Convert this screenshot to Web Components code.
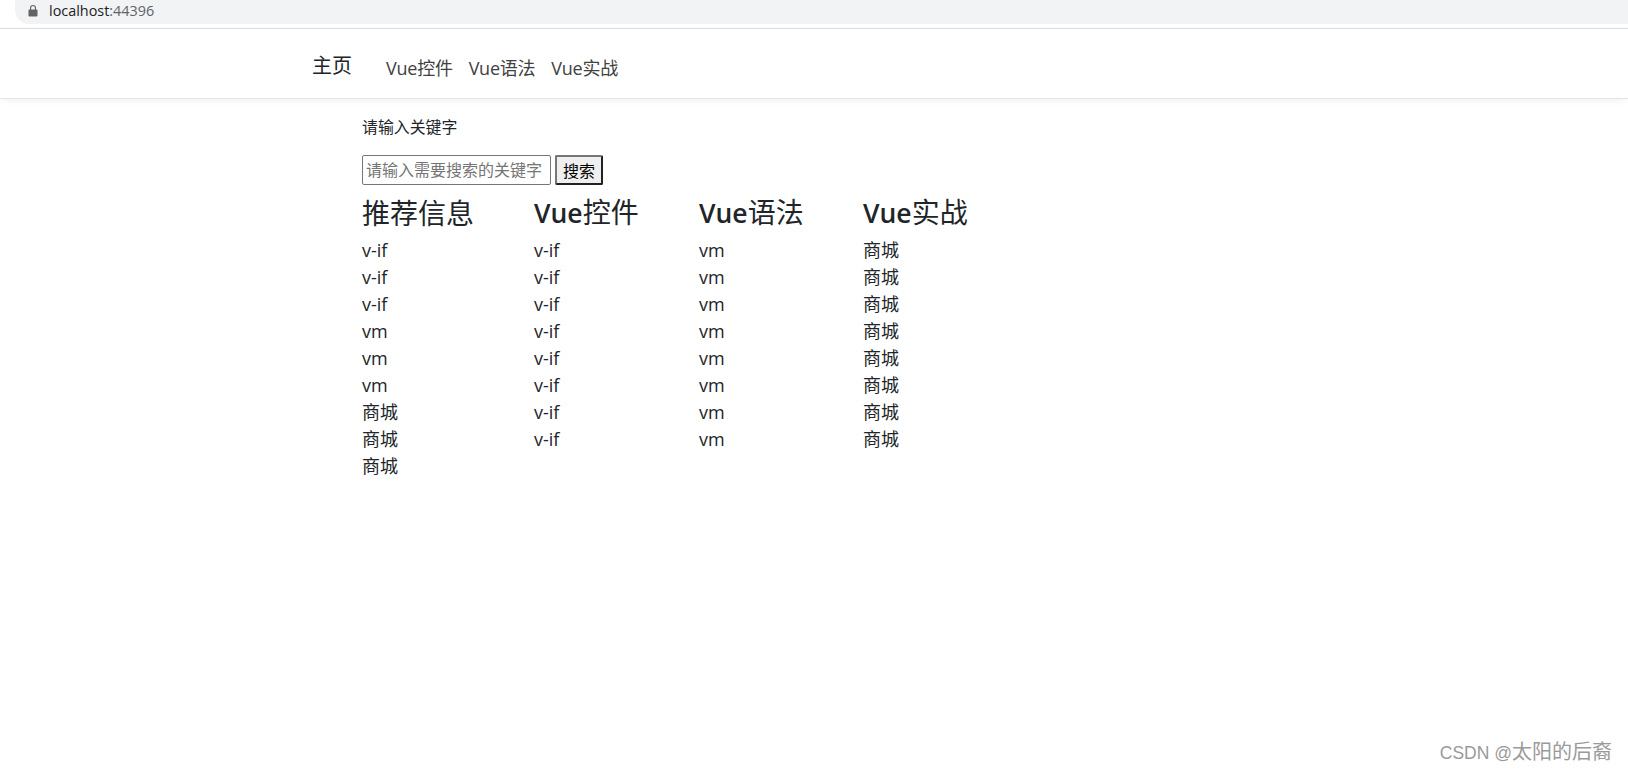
<!DOCTYPE html>
<html lang="zh">
<head>
<meta charset="utf-8">
<title>localhost:44396</title>
<style>
html, body { margin: 0; height: 100%; background: #fff; }
body { font-family: "Open Sans", "Noto Sans CJK SC", sans-serif; color: #212529; overflow: hidden; }
</style>
</head>
<body>
<browser-bar address="localhost" port=":44396"></browser-bar>
<nav-bar brand="主页">
  <a href="#">Vue控件</a>
  <a href="#">Vue语法</a>
  <a href="#">Vue实战</a>
</nav-bar>
<page-main>
  <search-form label="请输入关键字" placeholder="请输入需要搜索的关键字" action="搜索"></search-form>
  <link-table>
    <link-column plain title="推荐信息" items="v-if,v-if,v-if,vm,vm,vm,商城,商城,商城" width="172"></link-column>
    <link-column title="Vue控件" items="v-if,v-if,v-if,v-if,v-if,v-if,v-if,v-if" width="165"></link-column>
    <link-column title="Vue语法" items="vm,vm,vm,vm,vm,vm,vm,vm" width="164"></link-column>
    <link-column title="Vue实战" items="商城,商城,商城,商城,商城,商城,商城,商城" width="120"></link-column>
  </link-table>
</page-main>
<water-mark>CSDN @<b>太阳的后裔</b></water-mark>

<script>
function define(name, html, init) {
  const template = document.createElement("template");
  template.innerHTML = html;
  customElements.define(
    name,
    class extends HTMLElement {
      connectedCallback() {
        if (this.shadowRoot) return;
        const shadow = this.attachShadow({ mode: "open" });
        shadow.appendChild(template.content.cloneNode(true));
        if (init) init(this, shadow);
      }
    }
  );
}

define("browser-bar", `
<style>
:host { display: block; height: 29px; box-sizing: border-box; border-bottom: 1px solid #dadce0; }
#url {
  height: 24px; margin-left: 15px; padding-left: 13px; box-sizing: border-box;
  display: flex; align-items: center; gap: 11px;
  background: #f1f3f4; border-radius: 0 0 0 14px;
  font: 14.4px "Open Sans", sans-serif; color: #202124;
}
#port { color: #5f6368; }
svg { display: block; margin-top: -3px; }
#text { margin-top: -4px; }
</style>
<div id="url">
  <svg width="10" height="12" viewBox="0 0 10 12"><path fill="#5f6368" d="M1.4 4.4H2V3a3 3 0 0 1 6 0v1.4h.6c.5 0 .9.4.9.9v5.3c0 .5-.4.9-.9.9H1.4c-.5 0-.9-.4-.9-.9V5.3c0-.5.4-.9.9-.9zM3.1 4.4h3.8V3a1.9 1.9 0 0 0-3.8 0z"/></svg>
  <div id="text"><span id="host"></span><span id="port"></span></div>
</div>`, (el, s) => {
  s.getElementById("host").textContent = el.getAttribute("address");
  s.getElementById("port").textContent = el.getAttribute("port");
});

define("nav-bar", `
<style>
:host {
  display: flex; align-items: center; height: 70px; box-sizing: border-box;
  padding: 0 0 0 312px; border-bottom: 1px solid #e4e4ec;
  box-shadow: 0 4px 8px -3px rgba(0,0,0,.07);
  font-size: 18px;
}
#brand { font-size: 20px; color: #212529; margin-right: 34px; margin-top: 1px; }
#links { display: flex; gap: 16px; margin-top: 7px; letter-spacing: -.25px; }
::slotted(a) { color: #414141; text-decoration: none; }
</style>
<div id="brand"></div>
<div id="links"><slot></slot></div>`, (el, s) => {
  s.getElementById("brand").textContent = el.getAttribute("brand");
});

define("page-main", `
<style>
:host { display: block; padding: 16px 0 0 362px; }
</style>
<slot></slot>`);

define("search-form", `
<style>
:host { display: block; }
label { display: block; line-height: 24px; height: 24px; margin-bottom: 16px; color: #212529; font-size: 15.9px; }
#row { display: flex; gap: 4px; align-items: stretch; height: 30px; }
input {
  width: 189px; height: 30px; box-sizing: border-box; margin: 0; padding: 1px 3px;
  border: 1px solid #767676; border-radius: 2px; background: #fff;
  font: 16px "Open Sans", "Noto Sans CJK SC", sans-serif; color: #000;
}
input::placeholder { color: #757575; opacity: 1; }
button {
  width: 48px; height: 30px; box-sizing: border-box; margin: 0; padding: 0;
  border: 2px solid #000; border-color: #767676 #222 #222 #767676; border-radius: 2px; background: #efefef;
  font: 16px "Open Sans", "Noto Sans CJK SC", sans-serif; color: #000;
}
</style>
<label id="label"></label>
<div id="row"><input id="input"><button id="btn"></button></div>`, (el, s) => {
  s.getElementById("label").textContent = el.getAttribute("label");
  s.getElementById("input").placeholder = el.getAttribute("placeholder");
  s.getElementById("btn").textContent = el.getAttribute("action");
});

define("link-table", `
<style>
:host { display: flex; align-items: flex-start; margin-top: 10px; }
</style>
<slot></slot>`);

define("link-column", `
<style>
:host { display: block; flex: none; }
h2 { margin: 0 0 8px; height: 34px; font-size: 28px; font-weight: 400; line-height: 34px; color: #212529; }
:host([plain]) h2 { margin: 1px 0 7px; }
h2 span { font-weight: 600; font-size: 26.5px; }
div { font-size: 18px; line-height: 27px; height: 27px; color: #212529; }
</style>
<h2 id="title"></h2>
<section id="list"></section>`, (el, s) => {
  el.style.width = el.getAttribute("width") + "px";
  // latin part of the title is heavier than the CJK part
  s.getElementById("title").innerHTML = el.getAttribute("title").replace(/^[A-Za-z]+/, "<span>$&</span>");
  const list = s.getElementById("list");
  el.getAttribute("items").split(",").forEach((item) => {
    const row = document.createElement("div");
    row.textContent = item;
    list.appendChild(row);
  });
});

define("water-mark", `
<style>
:host {
  position: absolute; right: 16px; bottom: 5px; white-space: nowrap;
  font: 17.5px/28px "Liberation Sans", "Noto Sans CJK SC", sans-serif; color: #9a9a9a;
  text-shadow: 1px 1px 1px #fff;
}
::slotted(b) { font-weight: 400; font-size: 20px; }
</style>
<slot></slot>`);
</script>
</body>
</html>
